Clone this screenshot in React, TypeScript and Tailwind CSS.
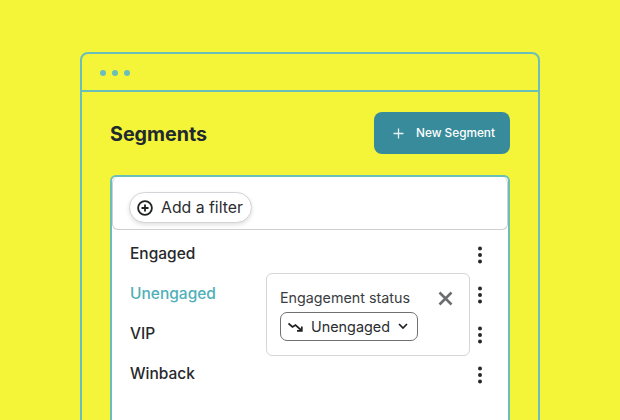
import React from "react";

const Dots = () => (
  <svg className="mt-[2px]" width="6" height="18" viewBox="0 0 6 18" fill="#26282b"><circle cx="3" cy="2.5" r="2"/><circle cx="3" cy="9" r="2"/><circle cx="3" cy="15.5" r="2"/></svg>
);

const rows = [
  { name: "Engaged", color: "text-[#26282b]" },
  { name: "Unengaged", color: "text-[#4fb0b8]" },
  { name: "VIP", color: "text-[#26282b]" },
  { name: "Winback", color: "text-[#26282b]" },
];

export default function App() {
  return (
    <div className="h-[420px] w-[620px] overflow-hidden bg-[#f4f438] pl-[80px] pt-[52px] font-['Inter',sans-serif]">
      <div className="h-[420px] w-[460px] rounded-t-[8px] border-2 border-[#6bbfbb]">
        <div className="flex h-[38px] items-center gap-[6px] border-b-2 border-[#6bbfbb] pl-[18px] pt-[1px]">
          <span className="h-[6px] w-[6px] rounded-full bg-[#6bbfbb]" />
          <span className="h-[6px] w-[6px] rounded-full bg-[#6bbfbb]" />
          <span className="h-[6px] w-[6px] rounded-full bg-[#6bbfbb]" />
        </div>
        <div className="px-[28px] pt-[20px]">
          <div className="flex items-center justify-between">
            <h1 className="pt-[3px] text-[19.7px] font-bold text-[#1f2a30]">Segments</h1>
            <button className="flex h-[42px] w-[136px] items-center gap-[12px] rounded-[8px] bg-[#388b9b] pl-[19px] text-[11.8px] font-medium text-white">
              <svg width="11" height="11" viewBox="0 0 11 11" stroke="#e8f2f2" strokeWidth="1.3"><path d="M5.5 0.5v10M0.5 5.5h10" /></svg>
              <span className="pt-[1px]">New Segment</span>
            </button>
          </div>
          <div className="relative mt-[21px] h-[300px] w-[400px] rounded-t-[6px] border-2 border-[#6bbfbb] bg-white">
            <div className="flex h-[53px] w-[396px] items-center rounded-[6px] border border-t-0 border-[#cfcfd2] pl-[16px] pt-[9px]">
              <div className="flex h-[31px] items-center gap-[8px] rounded-full border border-[#d4d4d8] bg-white pl-[7px] pr-[8px] shadow-[0_2px_4px_rgba(0,0,0,0.12)]">
                <svg width="16" height="16" viewBox="0 0 16 16" fill="none" stroke="#1e2022" strokeWidth="1.8"><circle cx="8" cy="8" r="6.9"/><path d="M8 4.5v7M4.5 8h7"/></svg>
                <span className="text-[15.8px] text-[#2b2d30]">Add a filter</span>
              </div>
            </div>
            <div className="flex flex-col pl-[18px] pr-[25px] pt-[4px]">
              {rows.map((r) => (
                <div key={r.name} className="flex h-[40px] items-center justify-between">
                  <span className={`text-[15.5px] font-medium ${r.color}`}>{r.name}</span>
                  <Dots />
                </div>
              ))}
            </div>
            <div className="absolute left-[154px] top-[96px] h-[83px] w-[204px] rounded-[6px] border border-[#d6d6d9] bg-white pl-[13px] pt-[15px]">
              <div className="flex items-center justify-between pr-[16px]">
                <span className="text-[14.3px] leading-[18px] text-[#3a3c3f]">Engagement status</span>
                <svg width="15" height="15" viewBox="0 0 15 15" stroke="#6b6d70" strokeWidth="2.6"><path d="M1.5 1.5l12 12M13.5 1.5l-12 12"/></svg>
              </div>
              <div className="mt-[5px] flex h-[29px] w-[138px] items-center rounded-[7px] border border-[#6f7072] pl-[7px]">
                <svg width="15" height="12" viewBox="0 0 15 12" fill="none" stroke="#1e2022" strokeWidth="1.7"><path d="M0.5 2.5l4 3.5 3-2 6 5.5M9 9.8h4.8V5.5"/></svg>
                <span className="ml-[8px] text-[14.4px] text-[#2b2d30]">Unengaged</span>
                <svg className="ml-[8px]" width="10" height="7" viewBox="0 0 10 7" fill="none" stroke="#1e2022" strokeWidth="1.7"><path d="M1 1l4 4 4-4"/></svg>
              </div>
            </div>
          </div>
        </div>
      </div>
    </div>
  );
}
